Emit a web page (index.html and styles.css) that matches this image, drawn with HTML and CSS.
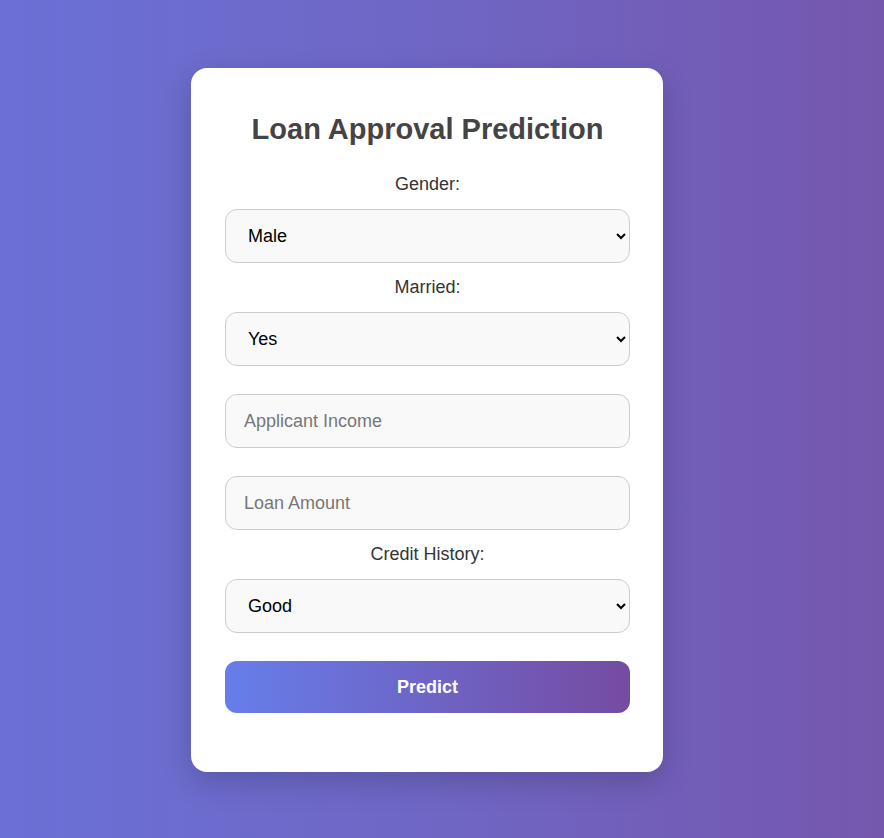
FILE: index.html
```html
<!DOCTYPE html>
<html lang="en">
<head>
<meta charset="UTF-8">
<title>Loan Approval Prediction</title>
<link rel="stylesheet" href="styles.css">
</head>
<body>
<div class="card">
  <h2 class="title">Loan Approval Prediction</h2>
  <form class="form">
    <label class="label" for="gender">Gender:</label>
    <select class="field" id="gender">
      <option>Male</option>
      <option>Female</option>
    </select>
    <label class="label" for="married">Married:</label>
    <select class="field" id="married">
      <option>Yes</option>
      <option>No</option>
    </select>
    <input class="field field-input" type="number" placeholder="Applicant Income">
    <input class="field field-input" type="number" placeholder="Loan Amount">
    <label class="label" for="credit">Credit History:</label>
    <select class="field" id="credit">
      <option>Good</option>
      <option>Bad</option>
    </select>
    <button class="btn" type="button">Predict</button>
  </form>
</div>
</body>
</html>
```
FILE: styles.css
```css
html, body {
  margin: 0;
  padding: 0;
}
body {
  min-height: 100vh;
  box-sizing: border-box;
  padding: 2px 30px 0 0;
  display: flex;
  align-items: center;
  justify-content: center;
  font-family: "Liberation Sans", Arial, sans-serif;
  background: linear-gradient(90deg, #6b70d6 0%, #6f66c4 50%, #7557ae 100%);
}
.card {
  width: 472px;
  box-sizing: border-box;
  padding: 45px 33px 45px 34px;
  background: #fff;
  border-radius: 16px;
  box-shadow: 0 10px 30px rgba(0, 0, 0, 0.18);
}
.title {
  margin: 0 0 29px;
  font-size: 29px;
  line-height: 32px;
  font-weight: bold;
  color: #444;
  text-align: center;
}
.form {
  display: flex;
  flex-direction: column;
}
.label {
  display: block;
  text-align: center;
  font-size: 18px;
  line-height: 21px;
  color: #333;
}
.field {
  display: block;
  width: 100%;
  height: 54px;
  box-sizing: border-box;
  margin: 14px 0;
  padding: 0 18px;
  border: 1px solid #ccc;
  border-radius: 12px;
  background-color: #f9f9f9;
  font-family: "Liberation Sans", Arial, sans-serif;
  font-size: 18px;
  color: #000;
  outline: none;
}
.field-input::placeholder {
  color: #777;
}
.btn {
  display: block;
  width: 100%;
  height: 52px;
  margin: 14px 0;
  border: none;
  border-radius: 12px;
  background: linear-gradient(90deg, #667eea 0%, #764ba2 100%);
  color: #fff;
  font-family: "Liberation Sans", Arial, sans-serif;
  font-size: 18px;
  font-weight: bold;
  cursor: pointer;
}
```
